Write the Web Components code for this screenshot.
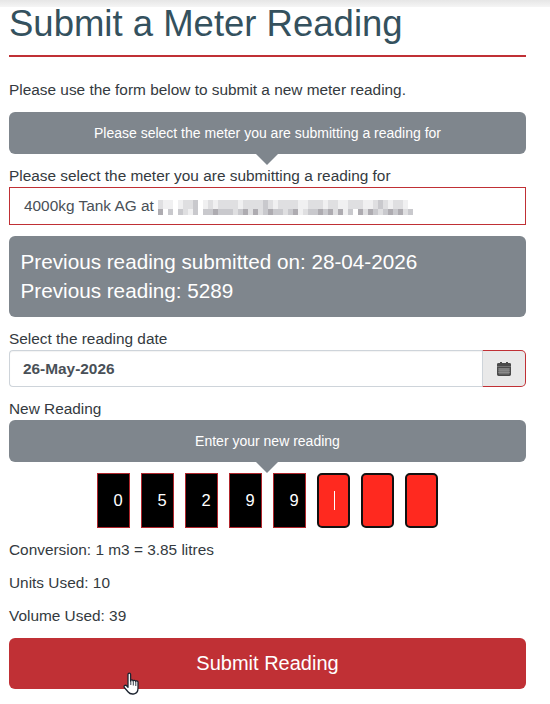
<!DOCTYPE html>
<html>
<head>
<meta charset="utf-8">
<title>Submit a Meter Reading</title>
<style>
html,body{margin:0;padding:0;background:#fff;}
body{font-family:"Liberation Sans",Arial,sans-serif;font-size:15.4px;color:#343a40;height:704px;overflow:hidden;position:relative;}
</style>
</head>
<body>
<top-strip></top-strip>
<meter-form>
	<page-title>Submit a Meter Reading</page-title>
	<plain-line>Please use the form below to submit a new meter reading.</plain-line>
	<tip-bubble>Please select the meter you are submitting a reading for</tip-bubble>
	<field-label>Please select the meter you are submitting a reading for</field-label>
	<meter-select>4000kg Tank AG at</meter-select>
	<reading-panel>
		<div>Previous reading submitted on: 28-04-2026</div>
		<div>Previous reading: 5289</div>
	</reading-panel>
	<field-label style="margin-top:11px">Select the reading date</field-label>
	<date-input>26-May-2026</date-input>
	<field-label style="margin-top:11px">New Reading</field-label>
	<tip-bubble>Enter your new reading</tip-bubble>
	<digit-row value="05299" total="8"></digit-row>
	<stat-line>Conversion: 1 m3 = 3.85 litres</stat-line>
	<stat-line>Units Used: 10</stat-line>
	<stat-line>Volume Used: 39</stat-line>
	<submit-button>Submit Reading</submit-button>
</meter-form>
<hand-cursor></hand-cursor>
<script>
// small helper so each element just declares its shadow markup
class Box extends HTMLElement {
	static markup = "<slot></slot>"
	constructor(){
		super()
		this.attachShadow({mode:"open"}).innerHTML = this.constructor.markup
	}
}
customElements.define("top-strip", class extends Box {
	static markup = `<style>:host{display:block;height:7px;background:linear-gradient(#e6e6e6,#f5f5f5);}</style>`
})
customElements.define("meter-form", class extends Box {
	static markup = `<style>:host{display:flex;flex-direction:column;width:517px;margin-left:9px;}</style><slot></slot>`
})
customElements.define("page-title", class extends Box {
	static markup = `<style>:host{display:block;font-size:36.5px;line-height:34px;color:#34515e;height:34px;padding-bottom:14px;border-bottom:2px solid #c03035;}</style><slot></slot>`
})
customElements.define("plain-line", class extends Box {
	static markup = `<style>:host{display:block;line-height:22px;margin-top:22px;margin-bottom:11px;color:#343a40;}</style><slot></slot>`
})
customElements.define("tip-bubble", class extends Box {
	static markup = `<style>
		:host{display:flex;align-items:center;justify-content:center;height:42px;background:#7f868d;color:#fff;border-radius:6px;font-size:14px;position:relative;flex:none;margin-bottom:11px;}
		:host::after{content:"";position:absolute;left:247px;top:42px;border:11px solid transparent;border-top-color:#7f868d;border-bottom:0;}
	</style><slot></slot>`
})
customElements.define("field-label", class extends Box {
	static markup = `<style>:host{display:block;line-height:22px;color:#343a40;}</style><slot></slot>`
})
// blurred address: a fixed mosaic of grey squares, tall faint row over a short dark one
const MOSAIC = [
	"aee.eaab.eaeaaaaeaaaabaeaaaaeeaaaeaaeeaaaeeabaeaae.",
	"c.b.baeb.bbcbbbabcacabcbbabceabbcbcaceb cacbabcbcab".replace(" ","."),
]
const SHADES = {".":"#ffffff",e:"#f0f0f1",a:"#dfdfe1",b:"#c9c9cd",c:"#aeacb1"}
customElements.define("meter-select", class extends Box {
	static markup = `<style>
		:host{display:flex;align-items:center;height:36px;border:1px solid #c03035;padding-left:14px;color:#495057;gap:4px;flex:none;}
		.blur{display:grid;grid-template-columns:repeat(51,5px);grid-template-rows:9px 6px;position:relative;top:1px;}
		.blur i{display:block;}
	</style><slot></slot><div class="blur"></div>`
	connectedCallback(){
		const blur = this.shadowRoot.querySelector(".blur")
		if(blur.children.length)return
		MOSAIC.forEach(row=>{
			for(const ch of row.padEnd(51,".")){
				const cell = document.createElement("i")
				cell.style.background = SHADES[ch]
				blur.appendChild(cell)
			}
		})
	}
})
customElements.define("reading-panel", class extends Box {
	static markup = `<style>:host{display:block;margin-top:11px;height:59px;padding:11px 11.5px;background:#7f868d;color:#fff;border-radius:6px;font-size:20.7px;line-height:29px;flex:none;}</style><slot></slot>`
})
customElements.define("date-input", class extends Box {
	static markup = `<style>
		:host{display:flex;height:37px;flex:none;}
		.val{flex:1;display:flex;align-items:center;padding-left:13px;font-weight:bold;color:#495057;border:1px solid #ced4da;border-right:0;border-radius:4px 0 0 4px;box-shadow:inset 0 1px 1px #0000000d;}
		.btn{width:42px;display:flex;align-items:center;justify-content:center;background:#e9e9e9;border:1px solid #c03035;border-left:1px solid #ced4da;border-radius:0 5px 5px 0;}
	</style><div class="val"><slot></slot></div>
	<div class="btn"><svg width="14" height="15" viewBox="0 0 14 16" preserveAspectRatio="none"><path fill="#4a4a4a" d="M0 3.500A1.500 1.500 0 0 1 1.500 2H3V1h2v1h4V1h2v1h1.500A1.500 1.500 0 0 1 14 3.500V6H0zM0 6.500h14v8a1.500 1.500 0 0 1-1.500 1.500h-11A1.500 1.500 0 0 1 0 14.500z"/><path stroke="#aaa" stroke-width=".7" d="M1 8.500h12M1 10.500h12M1 12.500h12M3 7.500v7M5 7.500v7M7 7.500v7M9 7.500v7M11 7.500v7"/></svg></div>`
})
customElements.define("digit-row", class extends Box {
	static markup = `<style>
		:host{display:flex;justify-content:center;gap:11px;flex:none;}
		.d{width:33px;height:55px;box-sizing:border-box;display:flex;align-items:center;justify-content:center;color:#fff;font-size:16.5px;padding-left:9px;}
		.on{background:#000;border:1px solid #b0262c;}
		.off{background:#ff291f;border:2px solid #111;border-radius:5px;}
		.caret{width:1px;height:19px;background:#fff;margin-right:7px;}
	</style><div id="r" style="display:contents"></div>`
	connectedCallback(){
		const value = this.getAttribute("value"), total = +this.getAttribute("total")
		const r = this.shadowRoot.getElementById("r")
		r.innerHTML = ""
		for(let i=0;i<total;i++){
			const d = document.createElement("div")
			d.className = "d "+(i<value.length?"on":"off")
			if(i<value.length)d.textContent = value[i]
			else if(i==value.length)d.innerHTML = `<span class="caret"></span>`
			r.appendChild(d)
		}
	}
})
customElements.define("stat-line", class extends Box {
	static markup = `<style>:host{display:block;line-height:22px;margin-top:11px;color:#343a40;}</style><slot></slot>`
})
customElements.define("submit-button", class extends Box {
	static markup = `<style>:host{display:flex;align-items:center;justify-content:center;height:51px;margin-top:11px;background:#c03035;color:#fff;border-radius:6px;font-size:20px;flex:none;}</style><slot></slot>`
})
customElements.define("hand-cursor", class extends Box {
	static markup = `<style>:host{position:absolute;left:123px;top:672px;width:20px;height:24px;}</style>
	<svg width="20" height="24" viewBox="0 0 20 24"><path fill="#fff" stroke="#1d2430" stroke-width="1.300" stroke-linejoin="round" d="M5 2.500c0-1.800 2.600-1.800 2.600 0V9c.2-1.500 2.500-1.400 2.600.2.300-1.300 2.400-1.200 2.500.3.400-1 2.300-.8 2.300.8v6c0 3-1.500 5-3.800 5.500-2.600.5-4.600 0-6-1.800L1.300 15.500c-.9-1.600 1-3 2.300-1.700L5 15.200z"/><path stroke="#1d2430" stroke-width=".9" d="M7.800 9v4M10.300 9.500v4M12.800 10v4"/></svg>`
})
</script>
</body>
</html>
